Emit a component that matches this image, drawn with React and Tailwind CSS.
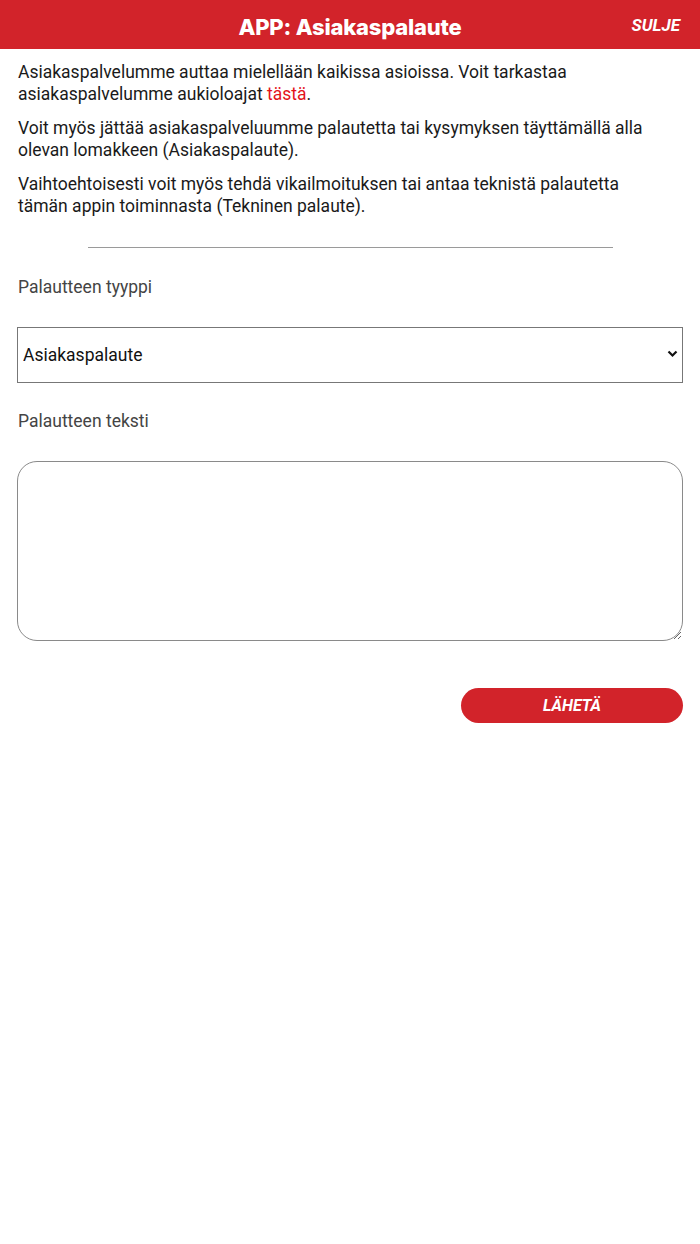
import { useState } from "react";

const App = () => {
  const [type, setType] = useState("Asiakaspalaute");
  const [text, setText] = useState("");

  return (
    <div className="min-h-[1244px] bg-white font-['Roboto',sans-serif] text-[17.5px] text-[#1a1a1a]">
      <header className="relative flex h-[49px] items-center justify-center bg-[#d2232a]">
        <h1 className="pt-[6px] font-['Inter',sans-serif] text-[22px] font-extrabold tracking-[-0.2px] text-white">
          APP: Asiakaspalaute
        </h1>
        <button className="absolute right-[20px] top-[13px] text-[17px] font-bold italic text-white">
          SULJE
        </button>
      </header>
      <div className="pl-[18px] pr-[36px] pt-[12px]">
        <p className="leading-[22px]">
          Asiakaspalvelumme auttaa mielellään kaikissa asioissa. Voit tarkastaa
          asiakaspalvelumme aukioloajat{" "}
          <a href="#" className="text-[#e3131b]">
            tästä
          </a>
          .
        </p>
        <p className="mt-[12px] leading-[22px]">
          Voit myös jättää asiakaspalveluumme palautetta tai kysymyksen täyttämällä alla
          olevan lomakkeen (Asiakaspalaute).
        </p>
        <p className="mt-[12px] leading-[22px]">
          Vaihtoehtoisesti voit myös tehdä vikailmoituksen tai antaa teknistä palautetta
          tämän appin toiminnasta (Tekninen palaute).
        </p>
      </div>
      <hr className="mx-auto mt-[30px] w-[525px] border-t border-[#9a9a9a]" />
      <form className="px-[17px]" onSubmit={(e) => e.preventDefault()}>
        <label htmlFor="type" className="mt-[28px] block pl-px leading-[22px] text-[#444]">
          Palautteen tyyppi
        </label>
        <div className="relative mt-[29px]">
          <select
            id="type"
            value={type}
            onChange={(e) => setType(e.target.value)}
            className="h-[56px] w-full appearance-none border border-[#777] bg-white pl-[5px] text-[#111] outline-none"
          >
            <option>Asiakaspalaute</option>
            <option>Tekninen palaute</option>
          </select>
          <svg
            className="pointer-events-none absolute right-[5px] top-[23px]"
            width="11"
            height="8"
            viewBox="0 0 11 8"
          >
            <path d="M1.5 1.5 L5.5 5.5 L9.5 1.5" fill="none" stroke="#111" strokeWidth="2.2" />
          </svg>
        </div>
        <label htmlFor="text" className="mt-[27px] block pl-px leading-[22px] text-[#444]">
          Palautteen teksti
        </label>
        <textarea
          id="text"
          value={text}
          onChange={(e) => setText(e.target.value)}
          className="mt-[29px] block h-[180px] w-full rounded-[20px] border border-[#8a8a8a] p-3 outline-none"
        />
        <div className="mt-[47px] flex justify-end">
          <button
            type="submit"
            className="h-[35px] w-[222px] rounded-full bg-[#d2232a] text-[16px] font-bold italic text-white"
          >
            LÄHETÄ
          </button>
        </div>
      </form>
    </div>
  );
};

export default App;
